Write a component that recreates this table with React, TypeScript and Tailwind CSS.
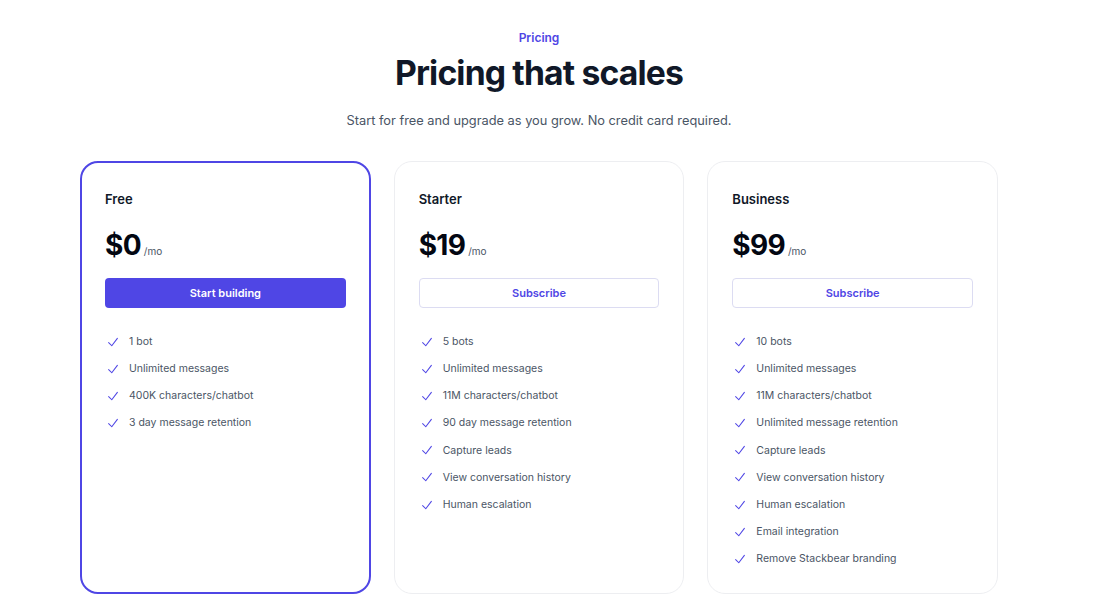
import React from 'react';

type Plan = {
  name: string;
  price: string;
  cta: string;
  featured?: boolean;
  features: string[];
};

const plans: Plan[] = [
  {
    name: 'Free',
    price: '$0',
    cta: 'Start building',
    featured: true,
    features: ['1 bot', 'Unlimited messages', '400K characters/chatbot', '3 day message retention'],
  },
  {
    name: 'Starter',
    price: '$19',
    cta: 'Subscribe',
    features: [
      '5 bots',
      'Unlimited messages',
      '11M characters/chatbot',
      '90 day message retention',
      'Capture leads',
      'View conversation history',
      'Human escalation',
    ],
  },
  {
    name: 'Business',
    price: '$99',
    cta: 'Subscribe',
    features: [
      '10 bots',
      'Unlimited messages',
      '11M characters/chatbot',
      'Unlimited message retention',
      'Capture leads',
      'View conversation history',
      'Human escalation',
      'Email integration',
      'Remove Stackbear branding',
    ],
  },
];

const CheckIcon = () => (
  <svg viewBox="0 0 20 20" fill="currentColor" className="w-[14px] h-[14px] flex-none text-[#4f46e5]">
    <path
      fillRule="evenodd"
      d="M16.704 4.153a.75.75 0 01.143 1.052l-8 10.5a.75.75 0 01-1.127.075l-4.5-4.5a.75.75 0 011.06-1.06l3.894 3.893 7.48-9.817a.75.75 0 011.05-.143z"
      clipRule="evenodd"
    />
  </svg>
);

const App: React.FC = () => {
  return (
    <div className="min-h-screen bg-white font-['Inter',sans-serif] antialiased">
      <div className="w-[918px] ml-[80px] pt-[31px]">
        {/* Header */}
        <div className="text-center">
          <p className="text-[12px] leading-[14px] font-semibold text-[#4f46e5]">Pricing</p>
          <h1 className="mt-[6px] text-[33.7px] leading-[44px] font-bold tracking-tight text-gray-900">
            Pricing that scales
          </h1>
          <p className="mt-[16px] text-[12.8px] leading-[20px] text-gray-600">
            Start for free and upgrade as you grow. No credit card required.
          </p>
        </div>

        {/* Plans */}
        <div className="mt-[30px] grid grid-cols-3 gap-[23px]">
          {plans.map((plan) => (
            <div
              key={plan.name}
              className={
                plan.featured
                  ? 'rounded-[18px] border-2 border-[#4f46e5] px-[23px] pt-[27px] pb-[25px]'
                  : 'rounded-[18px] border border-gray-200/70 px-[24px] pt-[28px] pb-[26px]'
              }
            >
              <h3 className="text-[13px] leading-[18px] font-semibold text-gray-900">{plan.name}</h3>
              <p className="mt-[21px] flex items-baseline gap-[3px]">
                <span className="text-[28px] leading-[32px] font-bold tracking-tight text-gray-950">
                  {plan.price}
                </span>
                <span className="text-[10px] leading-[14px] text-gray-600">/mo</span>
              </p>
              <button
                className={
                  plan.featured
                    ? 'mt-[17px] w-full h-[30px] rounded-[4px] bg-[#4f46e5] text-[11px] font-semibold text-white'
                    : 'mt-[17px] w-full h-[30px] rounded-[4px] border border-[#dcdcf2] bg-white text-[11px] font-semibold text-[#4f46e5]'
                }
              >
                {plan.cta}
              </button>
              <ul className="mt-[26px] flex flex-col gap-[11.1px]">
                {plan.features.map((f) => (
                  <li key={f} className="flex items-center gap-[9px] h-[16px] pl-[1px] text-[10.5px] text-gray-600">
                    <CheckIcon />
                    {f}
                  </li>
                ))}
              </ul>
            </div>
          ))}
        </div>
      </div>
    </div>
  );
};

export default App;
